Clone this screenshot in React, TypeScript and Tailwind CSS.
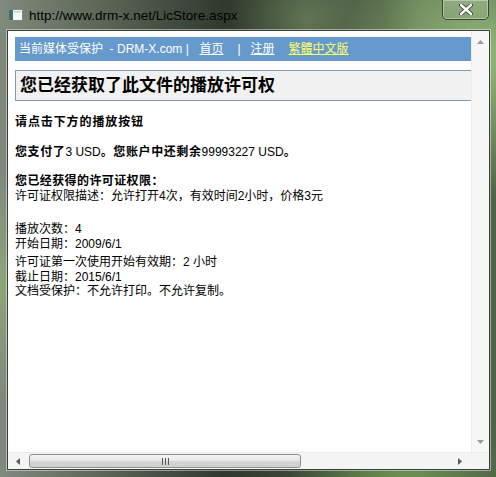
import React from 'react';

const cjk = { fontFamily: '"Liberation Sans", "Noto Sans CJK SC", sans-serif' };

function TitleIcon() {
    return (
        <svg width="15" height="12" viewBox="0 0 15 12">
            <rect x="0.5" y="0.5" width="14" height="11" fill="#f4f6f4" stroke="#7d8a83" />
            <rect x="1" y="1" width="4" height="10" fill="#3f6e68" />
            <rect x="6" y="2" width="7" height="1.5" fill="#c5d0cb" />
        </svg>
    );
}

function Arrow({ dir }: { dir: 'up' | 'down' | 'left' | 'right' }) {
    const pts = {
        up: '0,4 3.5,0 7,4',
        down: '0,0 7,0 3.5,4',
        left: '4,0 4,7 0,3.5',
        right: '0,0 4,3.5 0,7',
    }[dir];
    const w = dir === 'up' || dir === 'down' ? 7 : 4;
    const h = dir === 'up' || dir === 'down' ? 4 : 7;
    return (
        <svg width={w} height={h} viewBox={`0 0 ${w} ${h}`}>
            <polygon points={pts} fill={dir === 'up' || dir === 'down' ? '#9a9a9a' : '#5a5a5a'} />
        </svg>
    );
}

export default function App() {
    return (
        <div className="relative w-[496px] h-[477px] overflow-hidden bg-[radial-gradient(circle_at_97%_12%,rgba(170,215,140,0.75),transparent_22%),radial-gradient(circle_at_62%_4%,rgba(140,170,120,0.45),transparent_14%),radial-gradient(circle_at_80%_100%,rgba(120,170,90,0.6),transparent_18%),radial-gradient(circle_at_2%_60%,rgba(150,190,120,0.55),transparent_20%),linear-gradient(90deg,#7f8a7c_0%,#606b5c_18%,#2f392c_45%,#3f4c39_65%,#5a6f4d_85%,#4f6345_100%)]">
            {/* title bar */}
            <div className="flex items-center h-[30px] pl-[8px] gap-[6px]">
                <TitleIcon />
                <span className="text-[13.5px] text-black leading-none pt-[1px]" style={{ fontFamily: '"Liberation Sans", sans-serif' }}>
                    http://www.drm-x.net/LicStore.aspx
                </span>
            </div>

            {/* close button */}
            <div className="absolute left-[442px] top-[-1px] w-[47px] h-[21px] rounded-b-[5px] border border-[#3a4437] shadow-[inset_0_0_0_1px_rgba(255,255,255,0.35)] bg-[linear-gradient(180deg,rgba(255,255,255,0.18),rgba(255,255,255,0.05))] flex items-center justify-center">
                <svg width="14" height="11" viewBox="0 0 14 11">
                    <path d="M2 1 L12 10 M12 1 L2 10" stroke="#333" strokeWidth="4" strokeLinecap="round" />
                    <path d="M2 1 L12 10 M12 1 L2 10" stroke="#fff" strokeWidth="2.4" strokeLinecap="round" />
                </svg>
            </div>

            {/* client area */}
            <div className="absolute left-[7px] top-[30px] w-[483px] h-[440px] border border-[#3b3f3a] shadow-[0_0_0_1px_rgba(255,255,255,0.45)] bg-white flex flex-col">
                <div className="flex flex-1 min-h-0">
                    <div className="flex-1 overflow-hidden pl-[7px] pt-[6px]" style={cjk}>
                        <div className="w-[470px]">
                            <div className="h-[24px] bg-[#6699cc] flex items-center pl-[4px] text-[12px] text-white whitespace-nowrap">
                                <span>当前媒体受保护&nbsp; - DRM-X.com&nbsp;|&nbsp;&nbsp;</span>
                                <span className="underline ml-[4px]">首页</span>
                                <span className="ml-[14px]">|</span>
                                <span className="underline ml-[10px]">注册</span>
                                <span className="underline ml-[14px] text-[#ffff66]">繁體中文版</span>
                            </div>
                            <div className="mt-[9px] h-[31px] border border-[#7f9db9] bg-[#f1f1f1] flex items-center pl-[4px]">
                                <span className="text-[17px] font-bold text-black">您已经获取了此文件的播放许可权</span>
                            </div>
                        </div>

                        <div className="text-[12px] text-black leading-[15px]">
                            <div className="mt-[14px] font-bold tracking-[0.9px]">请点击下方的播放按钮</div>
                            <div className="mt-[15px] font-bold tracking-[0.6px]">
                                您支付了<span className="font-normal tracking-normal">3 USD</span>。您账户中还剩余<span className="font-normal tracking-normal">99993227 USD</span>。
                            </div>
                            <div className="mt-[14px] font-bold tracking-[0.4px]">您已经获得的许可证权限：</div>
                            <div>许可证权限描述：允许打开4次，有效时间2小时，价格3元</div>
                            <div className="mt-[18px]">播放次数：4</div>
                            <div className="leading-[14px]">开始日期：2009/6/1</div>
                            <div className="mt-[4px]">许可证第一次使用开始有效期：2 小时</div>
                            <div className="leading-[14px]">截止日期：2015/6/1</div>
                            <div className="leading-[14px]">文档受保护：不允许打印。不允许复制。</div>
                        </div>
                    </div>

                    {/* vertical scrollbar */}
                    <div className="w-[18px] bg-[#f7f7f7] border-l border-[#ececec] flex flex-col items-center justify-between pt-[9px] pb-[8px]">
                        <Arrow dir="up" />
                        <Arrow dir="down" />
                    </div>
                </div>

                {/* horizontal scrollbar */}
                <div className="flex h-[17px]">
                    <div className="flex-1 bg-[#f4f4f4] border-t border-[#ececec] flex items-center pl-[8px] pr-[9px]">
                        <Arrow dir="left" />
                        <div className="ml-[9px] w-[272px] h-[14px] rounded-[3px] border border-[#8e8f8f] bg-[linear-gradient(180deg,#f4f4f4_0%,#e8e8e8_45%,#d6d6d6_55%,#cfcfcf_100%)] flex items-center justify-center gap-[2px]">
                            <span className="w-[1px] h-[7px] bg-[#555]" />
                            <span className="w-[1px] h-[7px] bg-[#555]" />
                            <span className="w-[1px] h-[7px] bg-[#555]" />
                        </div>
                        <div className="flex-1" />
                        <Arrow dir="right" />
                    </div>
                    <div className="w-[18px] bg-[#f4f4f4] border-t border-[#ececec]" />
                </div>
            </div>
        </div>
    );
}
